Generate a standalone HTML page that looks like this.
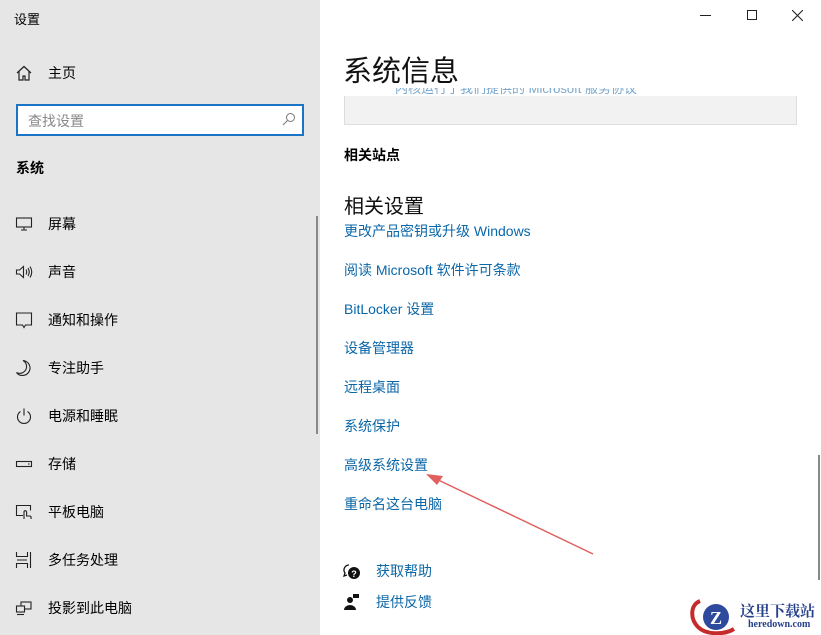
<!DOCTYPE html>
<html><head><meta charset="utf-8"><style>
*{margin:0;padding:0;box-sizing:border-box}
body{width:821px;height:635px;overflow:hidden;font-family:"Liberation Sans","Noto Sans CJK SC",sans-serif;background:#fff;position:relative;font-size:14px;color:#000}
.side{position:absolute;left:0;top:0;width:320px;height:635px;background:#e6e6e6}
.a{position:absolute;white-space:nowrap}
.nav{position:absolute;left:48px;font-size:14px;line-height:16px}
.ic{position:absolute;left:15px;width:18px;height:18px}
.link{position:absolute;left:344px;color:#0b67a8;font-size:14px;line-height:16px;white-space:nowrap}
</style></head><body>
<div class="side">
<div class="a" style="left:14px;top:9px;font-size:13px">设置</div>
<svg class="ic" style="top:64px" viewBox="0 0 18 18" fill="none" stroke="#222" stroke-width="1.2"><path d="M2 9L9 2.5 16 9M4 7.5V16h4v-4h2v4h4V7.5"/></svg>
<div class="nav" style="top:65px">主页</div>
<div style="position:absolute;left:16px;top:104px;width:288px;height:32px;background:#fff;border:2px solid #1a73c4"></div>
<div class="a" style="left:28px;top:111px;color:#888;font-size:14px">查找设置</div>
<svg style="position:absolute;left:282px;top:112px" width="14" height="14" viewBox="0 0 14 14" fill="none" stroke="#777" stroke-width="1"><circle cx="8.5" cy="5.5" r="4"/><path d="M5.5 8.5L1 13"/></svg>
<div class="a" style="left:16px;top:158px;font-weight:bold;font-size:14px">系统</div>
<svg class="ic" style="top:215px" viewBox="0 0 18 18" fill="none" stroke="#222" stroke-width="1.1"><rect x="1.5" y="3" width="15" height="9"/><path d="M9 12v3M6 15h6"/></svg>
<div class="nav" style="top:216px">屏幕</div>
<svg class="ic" style="top:263px" viewBox="0 0 18 18" fill="none" stroke="#222" stroke-width="1.1"><path d="M1.5 7h3l4-3.5v11l-4-3.5h-3z"/><path d="M11 6.5q1.5 2.5 0 5M13 5q2.5 4 0 8M15 3.5q3.5 5.5 0 11"/></svg>
<div class="nav" style="top:264px">声音</div>
<svg class="ic" style="top:311px" viewBox="0 0 18 18" fill="none" stroke="#222" stroke-width="1.1"><path d="M1.5 2h15v12h-6l-1.5 2.5L7.5 14h-6z"/></svg>
<div class="nav" style="top:312px">通知和操作</div>
<svg class="ic" style="top:359px" viewBox="0 0 18 18" fill="none" stroke="#222" stroke-width="1.1"><path d="M8 1.5a7.5 7.5 0 1 1-6.5 12 6.5 6.5 0 0 0 6.5-12z"/></svg>
<div class="nav" style="top:360px">专注助手</div>
<svg class="ic" style="top:407px" viewBox="0 0 18 18" fill="none" stroke="#222" stroke-width="1.1"><path d="M5.5 4.5a6.5 6.5 0 1 0 7 0M9 1.5v7"/></svg>
<div class="nav" style="top:408px">电源和睡眠</div>
<svg class="ic" style="top:455px" viewBox="0 0 18 18" fill="none" stroke="#222" stroke-width="1.1"><rect x="1.5" y="6.5" width="15" height="5"/><path d="M13 9h1.5"/></svg>
<div class="nav" style="top:456px">存储</div>
<svg class="ic" style="top:503px" viewBox="0 0 18 18" fill="none" stroke="#222" stroke-width="1.1"><path d="M8 12.5H1.5v-10h14v5"/><path d="M9 16v-7a1.3 1.3 0 0 1 2.6 0v4h3a1.5 1.5 0 0 1 1.5 1.5V16"/></svg>
<div class="nav" style="top:504px">平板电脑</div>
<svg class="ic" style="top:551px" viewBox="0 0 18 18" fill="none" stroke="#222" stroke-width="1.1"><path d="M1.5 1v4.5h11V1M1.5 17v-4.5h11V17M2 9h10M15.5 1v16"/></svg>
<div class="nav" style="top:552px">多任务处理</div>
<svg class="ic" style="top:599px" viewBox="0 0 18 18" fill="none" stroke="#222" stroke-width="1.1"><rect x="6" y="3" width="10" height="7"/><rect x="1.5" y="7" width="8" height="6" fill="#e6e6e6"/><path d="M2 15.5h7"/></svg>
<div class="nav" style="top:600px">投影到此电脑</div>
<div style="position:absolute;left:316px;top:216px;width:2px;height:218px;background:#888"></div>
</div>
<!-- window controls -->
<div style="position:absolute;left:700px;top:15px;width:11px;height:1px;background:#222"></div>
<div style="position:absolute;left:747px;top:10px;width:10px;height:10px;border:1px solid #222"></div>
<svg style="position:absolute;left:792px;top:10px" width="11" height="11" viewBox="0 0 11 11" stroke="#222" stroke-width="1.1"><path d="M0 0L11 11M11 0L0 11"/></svg>
<div class="a" style="left:343px;top:54px;font-size:29px;line-height:36px;color:#111">系统信息</div>
<div style="position:absolute;left:344px;top:96px;width:453px;height:29px;background:#f2f2f2;border:1px solid #ddd;border-top:none"></div>
<div class="a" style="left:395px;top:88px;font-size:13px;color:#7aa7cc;height:8px;overflow:hidden;line-height:14px"><div style="margin-top:-6px">内核运行了我们提供的 Microsoft 服务协议</div></div>
<div class="a" style="left:344px;top:145px;font-weight:bold;font-size:14px">相关站点</div>
<div class="a" style="left:344px;top:190px;font-size:20px;color:#111">相关设置</div>
<div class="link" style="top:223px">更改产品密钥或升级 Windows</div>
<div class="link" style="top:262px">阅读 Microsoft 软件许可条款</div>
<div class="link" style="top:301px">BitLocker 设置</div>
<div class="link" style="top:340px">设备管理器</div>
<div class="link" style="top:379px">远程桌面</div>
<div class="link" style="top:418px">系统保护</div>
<div class="link" style="top:457px">高级系统设置</div>
<div class="link" style="top:496px">重命名这台电脑</div>
<svg style="position:absolute;left:0;top:0" width="821" height="635"><path d="M593 554L432 477" stroke="#e06060" stroke-width="1.5"/><path d="M426 474L443 476L437 485z" fill="#e06060"/></svg>
<svg style="position:absolute;left:343px;top:563px" width="18" height="18" viewBox="0 0 18 18"><path d="M6 2a5 5 0 0 0-4 8l-1 3 3-1" fill="none" stroke="#111" stroke-width="1.3"/><circle cx="11" cy="10" r="6" fill="#111"/><text x="11" y="14" font-size="9" fill="#fff" text-anchor="middle" font-weight="bold">?</text></svg>
<div class="link" style="left:376px;top:563px">获取帮助</div>
<svg style="position:absolute;left:344px;top:593px" width="16" height="18" viewBox="0 0 16 18"><circle cx="6" cy="7" r="3" fill="#111"/><path d="M0 17a6 5 0 0 1 12 0z" fill="#111"/><rect x="9" y="1" width="6" height="4" fill="#111"/></svg>
<div class="link" style="left:376px;top:594px">提供反馈</div>
<div style="position:absolute;left:818px;top:455px;width:2px;height:125px;background:#888"></div>
<!-- logo -->
<svg style="position:absolute;left:688px;top:597px" width="55" height="38" viewBox="0 0 55 38"><path d="M12 4C2 8 2 22 10 30s26 8 36 2" fill="none" stroke="#c62b2b" stroke-width="4"/><circle cx="28" cy="20" r="13" fill="#2d4a9c"/><text x="28" y="27" font-size="18" font-weight="bold" fill="#fff" text-anchor="middle" font-family="Liberation Serif">Z</text></svg>
<div class="a" style="left:740px;top:600px;font-size:15px;font-weight:bold;color:#27408b;font-family:'Liberation Serif','Noto Serif CJK SC',serif">这里下载站</div>
<div class="a" style="left:748px;top:619px;font-size:10px;font-weight:bold;color:#27408b;font-family:'Liberation Serif',serif">heredown.com</div>
</body></html>
